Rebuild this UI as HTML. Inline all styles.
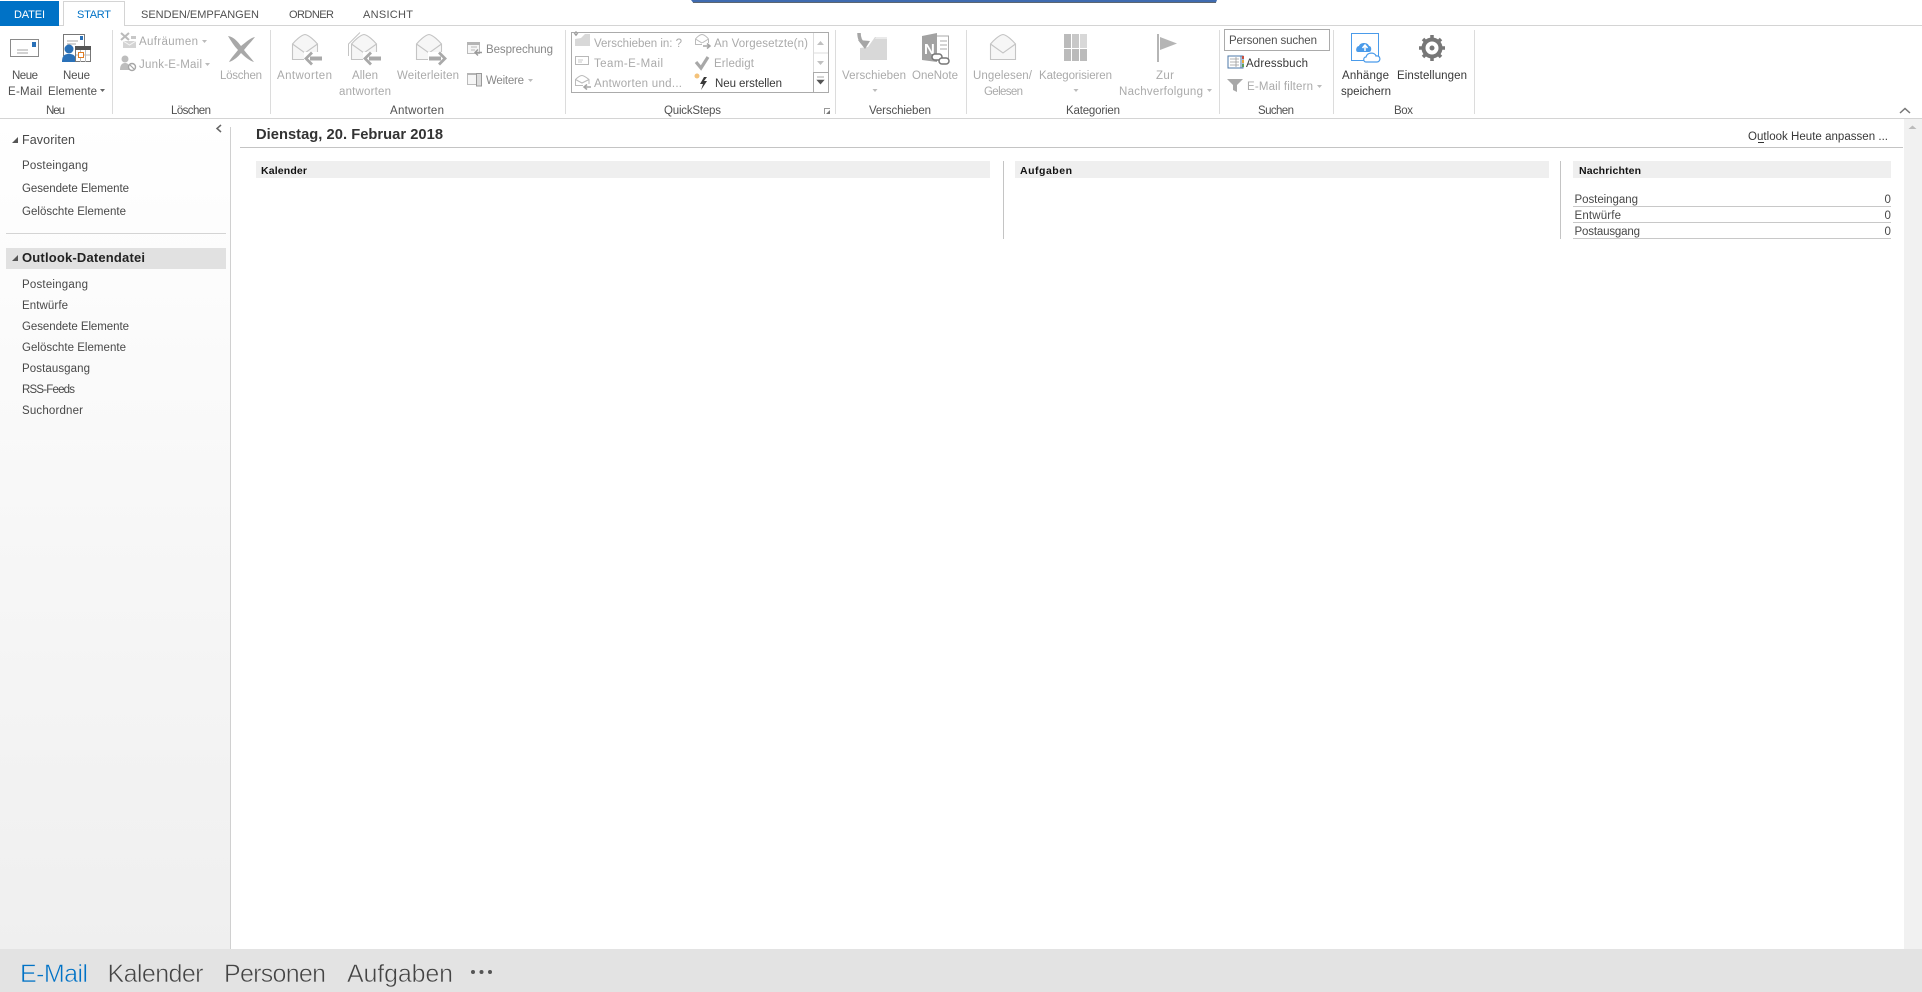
<!DOCTYPE html>
<html lang="de"><head><meta charset="utf-8"><title>Outlook Heute</title>
<style>
html,body{margin:0;padding:0;background:#fff;width:1922px;height:992px;overflow:hidden}
svg{display:block}
text{font-family:"Liberation Sans",sans-serif;font-size:11.5px;fill:#505050}
.g{fill:#aaa}
.d{fill:#383838}
.n{fill:#484848}
.t{font-size:11px}
.b{font-weight:bold;font-size:10.5px;fill:#111}
.h{font-size:25px;stroke:#e3e3e3;stroke-width:.55}
</style></head><body>
<svg xmlns="http://www.w3.org/2000/svg" width="1922" height="992" viewBox="0 0 1922 992">
<defs>
<linearGradient id="sb" x1="0" y1="0" x2="0" y2="1"><stop offset="0" stop-color="#fff"/><stop offset=".12" stop-color="#fdfdfd"/><stop offset="1" stop-color="#efefef"/></linearGradient>
<g id="env"><path d="M.5 10C3 7 9 1 13 .5C17 1 23 7 25.500 10V25.500H.5Z" fill="#f6f6f6" stroke="#c4c4c4" stroke-width="1.100"/><path d="M.5 10 13 19 25.500 10" fill="none" stroke="#c4c4c4" stroke-width="1.100"/></g>
</defs>
<rect width="1922" height="992" fill="#fff"/>
<!-- top bar -->
<path d="M691 0H1217L1216 2.500H693Z" fill="#3f6bb0"/><rect x="693" y="2" width="523" height="1" fill="#5d6670"/>
<!-- tabs -->
<rect x="0" y="25" width="1922" height="1" fill="#d4d4d4"/>
<rect x="0" y="1" width="59" height="25" fill="#0072c6"/>
<path d="M63.500 26V1.500H124.500V26" fill="#fff" stroke="#d4d4d4"/><rect x="64" y="25" width="60" height="1" fill="#fff"/>
<text class="t" x="14" y="18" textLength="31" style="fill:#fff">DATEI</text>
<text class="t" x="77" y="18" textLength="34" style="fill:#0072c6">START</text>
<text class="t" x="141" y="18" textLength="118">SENDEN/EMPFANGEN</text>
<text class="t" x="289" y="18" textLength="45">ORDNER</text>
<text class="t" x="363" y="18" textLength="50">ANSICHT</text>
<!-- ribbon bottom + seps -->
<rect x="0" y="118" width="1922" height="1" fill="#d4d4d4"/>
<g fill="#dcdcdc"><rect x="112" y="30" width="1" height="84"/><rect x="270" y="30" width="1" height="84"/><rect x="565" y="30" width="1" height="84"/><rect x="835" y="30" width="1" height="84"/><rect x="966" y="30" width="1" height="84"/><rect x="1219" y="30" width="1" height="84"/><rect x="1333" y="30" width="1" height="84"/><rect x="1474" y="30" width="1" height="84"/></g>
<!-- Neue E-Mail icon -->
<rect x="10.500" y="39.500" width="28" height="17" fill="#fff" stroke="#8a8a8a"/><rect x="32" y="42" width="4" height="5" fill="#2a71b8"/><path d="M17 50H28M17 53H28" stroke="#a6a6a6"/>
<!-- Neue Elemente icon -->
<path d="M63.500 56V34.500H84.500V46" fill="#fff" stroke="#777"/><rect x="80" y="36" width="3" height="4" fill="#2a71b8"/><path d="M67 41H78M67 44H76" stroke="#aaa"/>
<circle cx="69" cy="49" r="4.500" fill="#2a71b8"/><path d="M62 62C62 55 65 54 69 54S76 55 76 62Z" fill="#2a71b8"/>
<rect x="75.500" y="47.500" width="15" height="14" fill="#fff" stroke="#777"/><rect x="75" y="46" width="16" height="4" fill="#555"/><path d="M80.500 50V62M85.500 50V62M76 55H90" stroke="#bbb"/><rect x="78.500" y="52.500" width="5" height="5" fill="#fff" stroke="#e07b22"/>
<!-- Aufräumen -->
<path d="M121 33 129 40M129 33 121 40" stroke="#bbb" stroke-width="2"/><path d="M123 41H136V48H123Z" fill="#d4d4d4"/><path d="M123 41 129.500 45 136 41" stroke="#f6f6f6" fill="none"/><rect x="131" y="36" width="5" height="3" fill="#c8c8c8"/>
<!-- Junk -->
<circle cx="125" cy="59" r="3.500" fill="#bdbdbd"/><path d="M120 70C120 65 122 63 125 63S130 65 130 70Z" fill="#bdbdbd"/><circle cx="132" cy="67" r="3.500" fill="#fff" stroke="#a6a6a6" stroke-width="1.400"/><path d="M130 65 134 69" stroke="#a6a6a6" stroke-width="1.200"/>
<!-- Löschen X -->
<path d="M228 36C234 37 238 42 241 46C245 43 250 38 255 37C252 41 247 46 244 50C247 54 251 58 254 62C250 61 245 57 241 53C238 57 233 61 229 62C231 58 235 54 238 50C234 46 231 41 228 36Z" fill="#a8a8a8"/>
<!-- Reply icons -->
<use href="#env" x="292" y="34"/><rect x="304" y="52" width="19" height="12" fill="#fff"/><path d="M322 58.500H310" stroke="#a9a9a9" stroke-width="4" fill="none"/><path d="M312 52.500 306 58.500 312 64.500" fill="none" stroke="#a9a9a9" stroke-width="2.800"/>
<use href="#env" x="351" y="34"/><path d="M348.500 56V44L360 32.500" fill="none" stroke="#c4c4c4"/><rect x="363" y="52" width="19" height="12" fill="#fff"/><path d="M381 58.500H369" stroke="#a9a9a9" stroke-width="4" fill="none"/><path d="M371 52.500 365 58.500 371 64.500" fill="none" stroke="#a9a9a9" stroke-width="2.800"/>
<use href="#env" x="416" y="34"/><rect x="428" y="52" width="18" height="12" fill="#fff"/><path d="M429 58.500H441" stroke="#a9a9a9" stroke-width="4" fill="none"/><path d="M439 52.500 445 58.500 439 64.500" fill="none" stroke="#a9a9a9" stroke-width="2.800"/>
<!-- Besprechung / Weitere icons -->
<rect x="467.500" y="44.500" width="12" height="9" fill="#f6f6f6" stroke="#bbb"/><rect x="467" y="42" width="13" height="3" fill="#b5b5b5"/><path d="M471 47H477M471 50H475" stroke="#bbb"/><path d="M475 52.500H482M478 49.500 475 52.500 478 55.500" fill="none" stroke="#999" stroke-width="1.400"/>
<rect x="467.500" y="74.500" width="10" height="10" fill="#f6f6f6" stroke="#bbb"/><rect x="467" y="73" width="11" height="2" fill="#b5b5b5"/><rect x="476.500" y="73.500" width="5" height="12.500" fill="#ddd" stroke="#999"/>
<!-- QuickSteps gallery -->
<rect x="571.500" y="32.500" width="257" height="60" fill="#fff" stroke="#ababab"/>
<rect x="813" y="33" width="15" height="20" fill="#fff"/><path d="M813.500 33V92M813 53H828M813 72.500H828" stroke="#dcdcdc" fill="none"/><path d="M813.500 72V92M814 72.500H828" stroke="#ababab" fill="none"/>
<path d="M817 45 820.500 41 824 45Z" fill="#c0c0c0"/><path d="M817 61 820.500 65 824 61Z" fill="#c0c0c0"/><path d="M817 77H824M817 80 820.500 84 824 80Z" fill="#555" stroke="#555" stroke-width=".6"/>
<path d="M575 39 581 38 585 34H590V46H575Z" fill="#d8d8d8"/><path d="M576 31V35M574 33 576 35.500 578 33" stroke="#999" fill="none"/>
<rect x="575.500" y="56.500" width="13" height="8" fill="#fff" stroke="#b8b8b8"/><path d="M578 60H583M578 62H582" stroke="#c8c8c8"/>
<path d="M575.500 79.500C577 78 580 75.500 582 75.500C584 75.500 587 78 589 79.500V85.500H575.500Z" fill="#fff" stroke="#bbb"/><path d="M575.500 79.500 582 83 589 79.500" fill="none" stroke="#bbb"/><rect x="583" y="84" width="9" height="5" fill="#fff"/><path d="M591 87H585M587 84.500 584 87 587 89.500" fill="none" stroke="#a6a6a6" stroke-width="1.500"/>
<path d="M695.500 39C697 37 700 34.500 702 34.500C704 34.500 707 37 708.500 39V44.500H695.500Z" fill="#fff" stroke="#bbb"/><path d="M695.500 39 702 43 708.500 39" fill="none" stroke="#bbb"/><rect x="702" y="43" width="9" height="5" fill="#fff"/><path d="M703 46H709M707 43.500 710 46 707 48.500" fill="none" stroke="#a6a6a6" stroke-width="1.500"/>
<path d="M696 62 701 68 708 57" fill="none" stroke="#a8a8a8" stroke-width="3.200"/>
<circle cx="697" cy="76" r="2.500" fill="#f4c27a"/><path d="M704 77 700 84H703L701 90 707 81H704L707 77Z" fill="#383838"/>
<!-- launcher -->
<path d="M824.500 114V108.500H830" fill="none" stroke="#999"/><path d="M830 114H826L830 110Z" fill="#777"/>
<!-- Verschieben / OneNote -->
<path d="M860 60V48L868 47 875 37H887V60Z" fill="#d8d8d8"/><path d="M876 37H887V39H875Z" fill="#eaeaea"/><path d="M859 33C859 39 861 42 864 44" fill="none" stroke="#a6a6a6" stroke-width="3.500"/><path d="M858 40 870 41 865 49Z" fill="#a6a6a6"/>
<rect x="934" y="36" width="14.500" height="24" fill="#fff" stroke="#aaa"/><path d="M922 36 937 33V62L922 60Z" fill="#a2a2a2"/><path d="M940 41H947M940 45H947M940 49H947" stroke="#aaa"/>
<text x="924" y="54" style="fill:#fff;font-weight:bold;font-size:15px">N</text>
<rect x="932" y="54" width="10" height="6" rx="3" fill="#fff" stroke="#777" stroke-width="1.500"/><rect x="939" y="58" width="10" height="6" rx="3" fill="#fff" stroke="#777" stroke-width="1.500"/>
<!-- Kategorien icons -->
<use href="#env" x="990" y="34"/>
<g fill="#bbb"><rect x="1064" y="34" width="7" height="14"/><rect x="1064" y="49" width="7" height="12"/><rect x="1072" y="49" width="7" height="12"/><rect x="1080" y="49" width="7" height="12"/></g><rect x="1072" y="34" width="7" height="14" fill="#c8c8c8"/><rect x="1080" y="34" width="7" height="14" fill="#d8d8d8"/>
<rect x="1157" y="34" width="2" height="28" fill="#b5b5b5"/><path d="M1160 37 1177 43.500 1160 50Z" fill="#b5b5b5"/>
<!-- Suchen -->
<rect x="1224.500" y="29.500" width="105" height="21" fill="#fff" stroke="#ababab"/>
<path d="M1228 56H1241V68H1228ZM1241 56H1243V68H1241Z" fill="#fff" stroke="#4d79a8"/><path d="M1230 59H1239M1230 62H1239M1230 65H1239M1236 57V67" stroke="#999" stroke-width=".8"/><rect x="1242" y="56" width="2" height="3" fill="#c94f3d"/><rect x="1242" y="60" width="2" height="3" fill="#e6a93c"/><rect x="1242" y="64" width="2" height="3" fill="#5aa15a"/>
<path d="M1227 79H1243L1237 85V92L1233 90V85Z" fill="#a8a8a8"/>
<!-- Box -->
<rect x="1351.500" y="33.500" width="27" height="27" fill="#fff" stroke="#4a9bea"/>
<path d="M1358 52C1355 52 1356 46 1359 46C1360 42 1368 42 1369 46C1372 46 1372 52 1369 52Z" fill="#4a9bea"/><path d="M1365 51V46M1362.500 48 1365 45 1367.500 48" stroke="#fff" stroke-width="1.500" fill="none"/>
<path d="M1366 62C1363 62 1363 57 1366 57C1367 52 1375 52 1376 56C1381 55 1381 62 1377 62Z" fill="#fff" stroke="#4a9bea" stroke-width="1.200"/>
<circle cx="1432" cy="48" r="8.500" fill="none" stroke="#777" stroke-width="4"/><circle cx="1432" cy="48" r="2.500" fill="#777"/>
<g stroke="#777" stroke-width="3.500"><path d="M1432 35V39M1432 57V61M1419 48H1423M1441 48H1445M1423 39 1426 42M1438 54 1441 57M1441 39 1438 42M1426 54 1423 57"/></g>
<!-- Ribbon text -->
<text x="12" y="79" textLength="26">Neue</text>
<text x="8" y="95" textLength="34">E-Mail</text>
<text x="63" y="79" textLength="27">Neue</text>
<text x="48" y="95" textLength="49">Elemente</text>
<path d="M100 89H105L102.500 92Z" fill="#666"/>
<text x="46" y="114" textLength="19">Neu</text>
<text x="171" y="114" textLength="40">Löschen</text>
<text x="390" y="114" textLength="54">Antworten</text>
<text class="g" x="139" y="45" textLength="59">Aufräumen</text><path d="M202 40H207L204.500 43Z" fill="#bbb"/>
<text class="g" x="139" y="68" textLength="63">Junk-E-Mail</text><path d="M205 63H210L207.500 66Z" fill="#bbb"/>
<text class="g" x="220" y="79" textLength="42">Löschen</text>
<text class="g" x="277" y="79" textLength="55">Antworten</text>
<text class="g" x="352" y="79" textLength="26">Allen</text>
<text class="g" x="339" y="95" textLength="52">antworten</text>
<text class="g" x="397" y="79" textLength="62">Weiterleiten</text>
<text x="486" y="53" textLength="67" style="fill:#888">Besprechung</text>
<text x="486" y="84" textLength="38" style="fill:#888">Weitere</text><path d="M528 79H533L530.500 82Z" fill="#bbb"/>
<text class="g" x="594" y="47" textLength="88">Verschieben in: ?</text>
<text class="g" x="594" y="67" textLength="69">Team-E-Mail</text>
<text class="g" x="594" y="87" textLength="88">Antworten und...</text>
<text class="g" x="714" y="47" textLength="94">An Vorgesetzte(n)</text>
<text class="g" x="714" y="67" textLength="40">Erledigt</text>
<text class="d" x="715" y="87" textLength="67">Neu erstellen</text>
<text x="664" y="114" textLength="57">QuickSteps</text>
<text class="g" x="842" y="79" textLength="64">Verschieben</text><path d="M872.500 89H877.500L875 92Z" fill="#bbb"/>
<text class="g" x="912" y="79" textLength="46">OneNote</text>
<text x="869" y="114" textLength="62">Verschieben</text>
<text class="g" x="973" y="79" textLength="59">Ungelesen/</text>
<text class="g" x="984" y="95" textLength="39">Gelesen</text>
<text class="g" x="1039" y="79" textLength="73">Kategorisieren</text><path d="M1073.500 89H1078.500L1076 92Z" fill="#bbb"/>
<text class="g" x="1156" y="79" textLength="18">Zur</text>
<text class="g" x="1119" y="95" textLength="84">Nachverfolgung</text><path d="M1207 89H1212L1209.500 92Z" fill="#bbb"/>
<text x="1066" y="114" textLength="54">Kategorien</text>
<text x="1229" y="44" textLength="88">Personen suchen</text>
<text class="d" x="1246" y="67" textLength="62">Adressbuch</text>
<text class="g" x="1247" y="90" textLength="66">E-Mail filtern</text><path d="M1317 85H1322L1319.500 88Z" fill="#bbb"/>
<text x="1258" y="114" textLength="36">Suchen</text>
<text class="d" x="1342" y="79" textLength="47">Anhänge</text>
<text class="d" x="1341" y="95" textLength="50">speichern</text>
<text class="d" x="1397" y="79" textLength="70">Einstellungen</text>
<text x="1394" y="114" textLength="19">Box</text>
<path d="M1900 113 1905 108.500 1910 113" fill="none" stroke="#777" stroke-width="1.500"/>
<!-- Sidebar -->
<rect x="0" y="119" width="230" height="830" fill="url(#sb)"/>
<rect x="230" y="127" width="1" height="822" fill="#d0d0d0"/>
<path d="M221 125 217 128.500 221 132" fill="none" stroke="#666" stroke-width="1.500"/>
<path d="M18 137V143H12Z" fill="#555"/>
<text class="n" x="22" y="144" textLength="53" style="font-size:12.500px">Favoriten</text>
<text class="n" x="22" y="169" textLength="66">Posteingang</text>
<text class="n" x="22" y="192" textLength="107">Gesendete Elemente</text>
<text class="n" x="22" y="215" textLength="104">Gelöschte Elemente</text>
<rect x="6" y="233" width="220" height="1" fill="#d4d4d4"/>
<rect x="6" y="248" width="220" height="21" fill="#e1e1e1"/>
<path d="M18 255V261H12Z" fill="#555"/>
<text x="22" y="262" textLength="123" style="font-weight:bold;font-size:13px;fill:#222">Outlook-Datendatei</text>
<text class="n" x="22" y="288" textLength="66">Posteingang</text>
<text class="n" x="22" y="309" textLength="46">Entwürfe</text>
<text class="n" x="22" y="330" textLength="107">Gesendete Elemente</text>
<text class="n" x="22" y="351" textLength="104">Gelöschte Elemente</text>
<text class="n" x="22" y="372" textLength="68">Postausgang</text>
<text class="n" x="22" y="393" textLength="53">RSS-Feeds</text>
<text class="n" x="22" y="414" textLength="61">Suchordner</text>
<!-- Main -->
<text x="256" y="139" textLength="187" style="font-weight:bold;font-size:14.700px;fill:#333">Dienstag, 20. Februar 2018</text>
<rect x="240" y="147" width="1663" height="1" fill="#c4c4c4"/>
<text x="1748" y="140" textLength="140" class="d">Outlook Heute anpassen ...</text><rect x="1758" y="142" width="6" height="1" fill="#333"/>
<g fill="#efefef"><rect x="256" y="161" width="734" height="17"/><rect x="1015" y="161" width="534" height="17"/><rect x="1573" y="161" width="318" height="17"/></g>
<rect x="1003" y="161" width="1" height="78" fill="#c4c4c4"/><rect x="1560" y="161" width="1" height="78" fill="#c4c4c4"/>
<text class="b" x="261" y="174" textLength="46">Kalender</text>
<text class="b" x="1020" y="174" textLength="52">Aufgaben</text>
<text class="b" x="1579" y="174" textLength="62">Nachrichten</text>
<text class="n" x="1574.500" y="203" textLength="63.500">Posteingang</text><text class="n" x="1884.500" y="203">0</text>
<text class="n" x="1574.500" y="219" textLength="46.500">Entwürfe</text><text class="n" x="1884.500" y="219">0</text>
<text class="n" x="1574.500" y="235" textLength="65.500">Postausgang</text><text class="n" x="1884.500" y="235">0</text>
<g fill="#c8c8c8"><rect x="1573" y="206" width="318" height="1"/><rect x="1573" y="222" width="318" height="1"/><rect x="1573" y="238" width="318" height="1"/></g>
<!-- Scrollbar -->
<rect x="1904" y="119" width="18" height="830" fill="#f1f1f1"/>
<path d="M1908.500 129 1912.500 125.500 1916.500 129Z" fill="#bbb"/>
<!-- Bottom nav -->
<rect x="0" y="949" width="1922" height="43" fill="#e3e3e3"/>
<text class="h" x="20" y="982" textLength="68" style="fill:#0072c6">E-Mail</text>
<text class="h" x="107.500" y="982" textLength="96" style="fill:#444">Kalender</text>
<text class="h" x="224" y="982" textLength="102" style="fill:#444">Personen</text>
<text class="h" x="347" y="982" textLength="106" style="fill:#444">Aufgaben</text>
<g fill="#555"><circle cx="473" cy="972" r="2"/><circle cx="481.500" cy="972" r="2"/><circle cx="490" cy="972" r="2"/></g>
</svg>
</body></html>
